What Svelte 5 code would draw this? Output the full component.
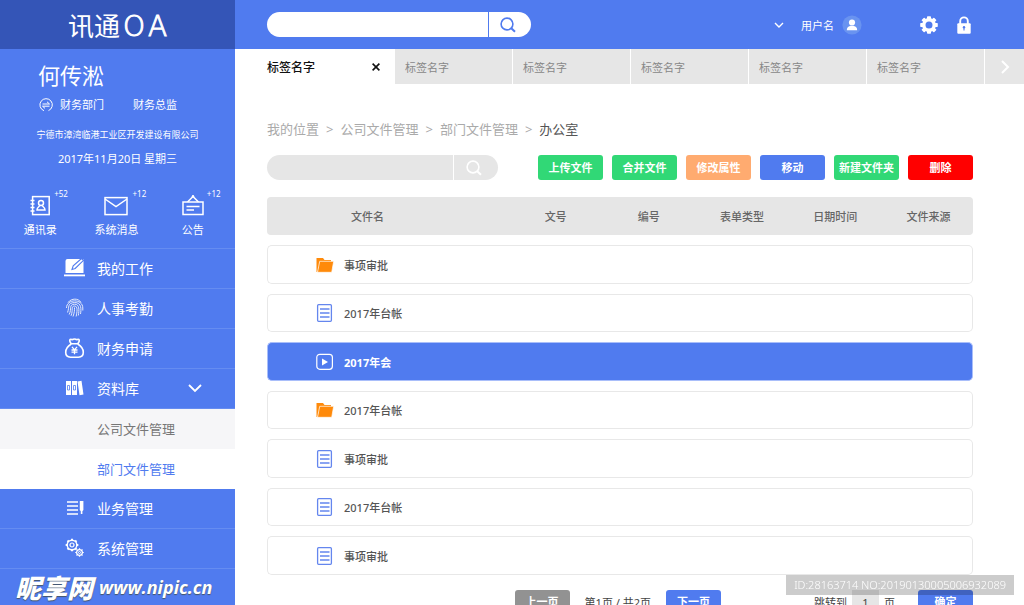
<script>
  const shortcuts = [
    { id: 'contacts', label: '通讯录', count: 52 },
    { id: 'message', label: '系统消息', count: 12 },
    { id: 'notice', label: '公告', count: 12 }
  ];

  const menu = [
    { id: 'work', label: '我的工作' },
    { id: 'attendance', label: '人事考勤' },
    { id: 'finance', label: '财务申请' },
    { id: 'library', label: '资料库', children: ['公司文件管理', '部门文件管理'] },
    { id: 'business', label: '业务管理' },
    { id: 'system', label: '系统管理' }
  ];

  const tabs = ['标签名字', '标签名字', '标签名字', '标签名字', '标签名字'];
  const crumbs = ['我的位置', '公司文件管理', '部门文件管理'];
  const columns = ['文件名', '文号', '编号', '表单类型', '日期时间', '文件来源'];

  const actions = [
    { label: '上传文件', color: 'green' },
    { label: '合并文件', color: 'green' },
    { label: '修改属性', color: 'orange' },
    { label: '移动', color: 'blue' },
    { label: '新建文件夹', color: 'green' },
    { label: '删除', color: 'red' }
  ];

  const files = [
    { type: 'folder', name: '事项审批' },
    { type: 'doc', name: '2017年台帐' },
    { type: 'video', name: '2017年会' },
    { type: 'folder', name: '2017年台帐' },
    { type: 'doc', name: '事项审批' },
    { type: 'doc', name: '2017年台帐' },
    { type: 'doc', name: '事项审批' }
  ];

  const teeth = [0, 45, 90, 135, 180, 225, 270, 315];

  let open = $state('library');
  let activeChild = $state('部门文件管理');
  let selected = $state(2);
  let page = $state('1');

  const toggle = (item) => {
    if (item.children) open = open === item.id ? '' : item.id;
  };
</script>

{#snippet searchIcon()}
  <svg width="16" height="16" viewBox="0 0 16 16" fill="none" stroke="currentColor" stroke-width="1.6">
    <circle cx="7" cy="7" r="5.9" />
    <path d="M11 11l4 3.8" stroke-width="2" />
  </svg>
{/snippet}

{#snippet shortcutIcon(id)}
  {#if id === 'contacts'}
    <svg width="20" height="22" viewBox="2 0 20 22" fill="none" stroke="currentColor" stroke-width="1.5">
      <rect x="4.6" y="1.6" width="16.6" height="18" />
      <path d="M2.500 5.5h4M2.500 9h4M2.500 12.5h4M2.500 16h4" />
      <circle cx="13" cy="8" r="2.5" />
      <path d="M11.8 10.2c0 1.6-2.8 1.8-2.8 4.8h8c0-3-2.8-3.2-2.8-4.8" />
    </svg>
  {:else if id === 'message'}
    <svg width="24" height="22" viewBox="0 0 24 22" fill="none" stroke="currentColor" stroke-width="1.5">
      <rect x="1" y="2.6" width="22" height="17" />
      <path d="M1 4l11 7.5L23 4" />
    </svg>
  {:else}
    <svg width="20" height="22" viewBox="2 0 20 22" fill="none" stroke="currentColor" stroke-width="1.5">
      <rect x="2" y="7" width="20" height="12.5" />
      <path d="M6.5 7L12 1.5 17.5 7M5.5 11.5h13M5.5 15h7.5" />
      <circle cx="12" cy="1.2" r="1.2" fill="currentColor" stroke="none" />
    </svg>
  {/if}
{/snippet}

{#snippet menuIcon(id)}
  <svg width="22" height="20" viewBox="0 0 22 20" fill="none" stroke="currentColor">
    {#if id === 'work'}
      <path d="M3.5 1h16v14H1.5V3a2 2 0 0 1 2-2z" fill="currentColor" stroke="none" />
      <path d="M0 16.5h21v1.8H0z" fill="currentColor" stroke="none" />
      <path d="M8 11.5l1.2-3.6L17.5.5l2 1.8-8.3 8.2z" fill="#fff" stroke="#507bef" stroke-width="1.1" />
    {:else if id === 'attendance'}
      <g stroke-width="1" opacity="0.85">
        <path d="M4 4.5C7.5 0 14.500 0 17 4.500" />
        <path d="M2.500 10C2.500.5 18.800.5 18.800 10v2.500" />
        <path d="M3.600 14.500C5.500 9 3 5 10.600 4.500c7.200 0 6.700 7 5.900 11.500" />
        <path d="M5.200 16.500C8 11 4.500 6.500 10.600 6.200c5 0 4.700 6 3.700 11.300" />
        <path d="M7 17.800C9.500 12 6.500 8.300 10.600 8c3.500 0 2.500 6.500 1.500 10.500" />
        <path d="M9 18.500c1.500-4 1.500-6 1.500-9" />
      </g>
    {:else if id === 'finance'}
      <path d="M7.2 5.8C5.8 3.8 5 2.4 6.2 1.400c1-.7 1.700.5 2.300.2.8-.9 3.200-.9 4 0 .6.3 1.300-.9 2.300-.2 1.200 1 .4 2.400-1 4.400zM7.200 6C4 8 1.700 10.800 1.700 14.300c0 3 1.700 4.900 4.800 4.900h8c3.100 0 4.800-1.900 4.800-4.900 0-3.500-2.300-6.300-5.500-8.300" stroke-width="1.600" />
      <path d="M8 8.800l2.500 3L13 8.800M7.500 12h6M7.500 14.200h6M10.500 12v4.300" stroke-width="1.300" />
    {:else if id === 'library'}
      <path d="M2 3h5v14H2zM8 3h5v14H8zM13.500 3.500l4-.7 2 13.800-4 .7z" fill="currentColor" stroke="none" />
      <path d="M3.500 7.500h2v4.500h-2zM9.500 7.500h2v4.500h-2z" stroke="#507bef" stroke-width="0.800" />
    {:else if id === 'business'}
      <path d="M3 4h11M3 8h11M3 12h11M3 16h11" stroke-width="1.400" />
      <path d="M15.800 3h3.600v9l-1 1.200V16h-1.600v-2.800l-1-1.200z" fill="currentColor" stroke="none" />
    {:else}
      <g transform="translate(8 7)">
        <circle r="4.800" stroke-width="1.400" />
        <circle r="2" stroke-width="1.200" />
        {#each teeth as angle}
          <path d="M-1 -5.500h2" transform="rotate({angle})" stroke-width="1.700" />
        {/each}
      </g>
      <g transform="translate(15.5 14.5)">
        <circle r="2.900" stroke-width="1.300" />
        <circle r="1" />
        {#each teeth as angle}
          <path d="M-.6 -3.600h1.200" transform="rotate({angle})" stroke-width="1.300" />
        {/each}
      </g>
    {/if}
  </svg>
{/snippet}

{#snippet fileIcon(type)}
  <svg width="18" height="18" viewBox="0 0 18 18" fill="none">
    {#if type === 'folder'}
      <path d="M.5 2h6.500l1.500 2H15v2.500H4L1.500 16H.5z" fill="#ff8a0a" />
      <path d="M3.700 5.300h14l-2 11H1.500z" fill="#ff8a0a" stroke="#fff" stroke-width="0.700" />
    {:else if type === 'doc'}
      <rect x="1.600" y=".7" width="13.800" height="16.600" rx="1" stroke="#6486ee" stroke-width="1.300" />
      <path d="M4 5h9.500M4 9h9.500M4 13h9.500" stroke="#6486ee" stroke-width="1.300" />
    {:else}
      <rect x=".8" y="1.300" width="15.600" height="15" rx="3" stroke="#fff" stroke-width="1.200" />
      <path d="M6 5.500l6 3.500-6 3.500z" fill="#fff" />
    {/if}
  </svg>
{/snippet}

<div class="layout">
  <aside class="sidebar">
    <div class="logo">讯通<span>O</span><span>A</span></div>

    <section class="profile">
      <h1>何传淞</h1>
      <div class="dept">
        <svg width="14" height="14" viewBox="0 0 14 14" fill="none" stroke="currentColor">
          <path d="M5 12.700A6.200 6.200 0 1 1 9.500 12.600" />
          <path d="M3.500 6h7L8 3.800M10.500 8.200h-7L6 10.400" />
        </svg>
        <span>财务部门</span>
        <span class="role">财务总监</span>
      </div>
      <p class="company">宁德市漳湾临港工业区开发建设有限公司</p>
      <p class="date">2017年11月20日 星期三</p>

      <div class="shortcuts">
        {#each shortcuts as item}
          <button class="shortcut">
            <span class="shortcut-icon">
              {@render shortcutIcon(item.id)}
              <span class="badge">+{item.count}</span>
            </span>
            {item.label}
          </button>
        {/each}
      </div>
    </section>

    <nav>
      {#each menu as item}
        <button class="menu-item" onclick={() => toggle(item)}>
          {@render menuIcon(item.id)}
          <span>{item.label}</span>
          {#if item.children}
            <svg class="arrow" width="14" height="10" viewBox="0 0 14 10" fill="none" stroke="currentColor" stroke-width="1.8">
              <path d="M1 2l6 6 6-6" />
            </svg>
          {/if}
        </button>
        {#if item.children && open === item.id}
          {#each item.children as child}
            <button class="sub-item" class:active={activeChild === child} onclick={() => (activeChild = child)}>
              {child}
            </button>
          {/each}
        {/if}
      {/each}
    </nav>

    <div class="site"><strong>昵享网</strong><span>www.nipic.cn</span></div>
  </aside>

  <div class="main">
    <header class="topbar">
      <form class="search top-search">
        <input type="text" aria-label="搜索" />
        <button type="button" aria-label="搜索">{@render searchIcon()}</button>
      </form>
      <div class="user-area">
        <button class="user">
          <svg width="10" height="6" viewBox="0 0 10 6" fill="none" stroke="currentColor" stroke-width="1.4">
            <path d="M1 1l4 4 4-4" />
          </svg>
          <span>用户名</span>
          <svg width="20" height="20" viewBox="0 0 20 20" fill="#fff">
            <circle cx="10" cy="10" r="9.6" fill="#6993f0" />
            <circle cx="10" cy="7.5" r="3.1" />
            <path d="M4.8 15.300c0-3 2-4.300 3.700-4.300h3c1.700 0 3.700 1.300 3.700 4.300z" />
          </svg>
        </button>
        <button class="tool" aria-label="设置">
          <svg width="18" height="18" viewBox="-9 -9 18 18">
            <circle r="5.200" fill="none" stroke="#fff" stroke-width="3.400" />
            {#each teeth as angle}
              <rect x="-2" y="-8.800" width="4" height="3.500" rx=".8" fill="#fff" transform="rotate({angle})" />
            {/each}
          </svg>
        </button>
        <button class="tool" aria-label="锁定">
          <svg width="14" height="18" viewBox="0 0 14 18" fill="none">
            <path d="M3.200 8V5.200a3.800 3.800 0 0 1 7.600 0V8" stroke="#fff" stroke-width="1.900" />
            <rect x=".3" y="7.300" width="13.400" height="10.400" rx="1" fill="#fff" />
            <circle cx="7" cy="11.300" r="1.200" fill="#507bef" />
            <path d="M7 11.500v3" stroke="#507bef" stroke-width="1.100" />
          </svg>
        </button>
      </div>
    </header>

    <div class="tabs">
      <div class="tab-active">
        <span>标签名字</span>
        <button aria-label="关闭">
          <svg width="8" height="8" viewBox="0 0 8 8" stroke="#111" stroke-width="1.6">
            <path d="M.6.6l6.800 6.800M7.400.6L.6 7.400" />
          </svg>
        </button>
      </div>
      {#each tabs as tab}
        <button class="tab">{tab}</button>
      {/each}
      <button class="tab-next" aria-label="更多">
        <svg width="8" height="14" viewBox="0 0 8 14" fill="none" stroke="#fff" stroke-width="2">
          <path d="M1 1l6 6-6 6" />
        </svg>
      </button>
    </div>

    <main>
      <div class="crumbs">
        {#each crumbs as crumb}
          <a href="#top">{crumb}</a>
          <span>&gt;</span>
        {/each}
        <b>办公室</b>
      </div>

      <div class="toolbar">
        <form class="search file-search">
          <input type="text" aria-label="搜索文件" />
          <button type="button" aria-label="搜索文件">{@render searchIcon()}</button>
        </form>
        <div class="actions">
          {#each actions as action}
            <button class="btn {action.color}">{action.label}</button>
          {/each}
        </div>
      </div>

      <table>
        <thead>
          <tr>
            {#each columns as column}
              <th>{column}</th>
            {/each}
          </tr>
        </thead>
        <tbody>
          {#each files as file, i}
            <tr class:selected={selected === i} onclick={() => (selected = i)}>
              <td>
                <div class="file">
                  {@render fileIcon(file.type)}
                  <span>{file.name}</span>
                </div>
              </td>
              <td></td>
              <td></td>
              <td></td>
              <td></td>
              <td></td>
            </tr>
          {/each}
        </tbody>
      </table>

      <div class="pager">
        <button class="btn gray">上一页</button>
        <span class="count">第1页 / 共2页</span>
        <button class="btn blue">下一页</button>
        <label class="jump">跳转到 <input type="text" bind:value={page} /> 页</label>
        <button class="btn blue">确定</button>
      </div>
    </main>
  </div>

  <div class="serial">ID:28163714 NO:20190130005006932089</div>
</div>

<style>
  :global(body) {
    margin: 0;
    background: #fff;
  }

  .layout {
    display: grid;
    grid-template-columns: 235px 1fr;
    height: 100vh;
    overflow: hidden;
    font-family: "Noto Sans", "Noto Sans CJK SC", sans-serif;
    font-size: 11px;
    color: #555;
  }

  button,
  input {
    margin: 0;
    padding: 0;
    border: none;
    background: none;
    font: inherit;
    color: inherit;
  }

  button {
    cursor: pointer;
  }

  svg {
    flex: none;
    overflow: visible;
  }

  /* sidebar */
  .sidebar {
    background: #507bef;
    color: #fff;
    overflow: hidden;
  }

  .logo {
    display: flex;
    align-items: center;
    justify-content: center;
    height: 49px;
    background: #3455b7;
    font-size: 26px;
    font-weight: 400;
  }

  .logo span {
    margin-left: 3px;
    padding-top: 3px;
    font-family: "DejaVu Sans", sans-serif;
    font-size: 28px;
    font-weight: 200;
    -webkit-text-stroke: 1px #fff;
  }

  .profile {
    box-sizing: border-box;
    height: 200px;
    padding-top: 10px;
    border-bottom: 1px solid #658cf1;
  }

  .profile h1 {
    margin: 0;
    padding-left: 38px;
    font-size: 22px;
    font-weight: 400;
    line-height: 32px;
  }

  .dept {
    display: flex;
    align-items: center;
    gap: 7px;
    padding: 4px 0 0 39px;
    line-height: 20px;
  }

  .role {
    margin-left: 22px;
  }

  .company,
  .date {
    margin: 0;
    line-height: 20px;
    text-align: center;
  }

  .company {
    margin-top: 10px;
    font-size: 9px;
  }

  .date {
    margin-top: 4px;
  }

  .shortcuts {
    display: grid;
    grid-template-columns: repeat(3, 1fr);
    margin-top: 26px;
    padding: 0 4px 0 2px;
  }

  .shortcut {
    display: flex;
    flex-direction: column;
    align-items: center;
    gap: 3px;
    line-height: 20px;
  }

  .shortcut-icon {
    position: relative;
    display: flex;
  }

  .badge {
    position: absolute;
    top: -6px;
    left: calc(100% + 4px);
    font-size: 8px;
    line-height: 10px;
  }

  .menu-item,
  .sub-item {
    display: flex;
    align-items: center;
    box-sizing: border-box;
    width: 100%;
    height: 40px;
    padding-bottom: 2px;
  }

  .menu-item {
    gap: 11px;
    padding-left: 64px;
    padding-right: 33px;
    border-bottom: 1px solid #658cf1;
    font-size: 14px;
  }

  .arrow {
    margin-left: auto;
  }

  .sub-item {
    padding-left: 97px;
    background: #f6f6f8;
    color: #777;
    font-size: 13px;
  }

  .sub-item.active {
    background: #fff;
    color: #507bef;
  }

  .site {
    display: flex;
    align-items: center;
    gap: 6px;
    height: 36px;
    padding-left: 15px;
    font-style: italic;
    text-shadow: 0 1px 1px #456;
  }

  .site strong {
    font-size: 26px;
    font-weight: 900;
  }

  .site span {
    font-family: "Open Sans", sans-serif;
    font-size: 18px;
    font-weight: 700;
  }

  /* top bar */
  .main {
    min-width: 0;
  }

  .topbar {
    display: flex;
    align-items: center;
    justify-content: space-between;
    height: 49px;
    padding: 0 53px 0 32px;
    background: #507bef;
    color: #fff;
  }

  .search {
    display: flex;
    height: 25px;
    border-radius: 13px;
    overflow: hidden;
  }

  .search input {
    flex: 1;
    min-width: 0;
    padding: 0 12px;
    outline: none;
  }

  .search button {
    display: flex;
    align-items: center;
    justify-content: center;
    width: 43px;
    padding-right: 4px;
  }

  .top-search {
    width: 264px;
    background: #fff;
    color: #507bef;
  }

  .top-search button {
    border-left: 1px solid #507bef;
  }

  .user-area {
    display: flex;
    align-items: center;
  }

  .user {
    display: flex;
    align-items: center;
    margin-right: 39px;
  }

  .user span {
    margin: 0 8px 0 17px;
  }

  .tool {
    display: flex;
    margin-left: 19px;
  }

  /* tabs */
  .tabs {
    display: flex;
    height: 35px;
  }

  .tab-active {
    display: flex;
    align-items: center;
    justify-content: space-between;
    box-sizing: border-box;
    width: 160px;
    padding: 0 15px 0 32px;
    color: #111;
    font-size: 12px;
    font-weight: 500;
  }

  .tab-active button {
    display: flex;
  }

  .tab {
    flex: 1;
    padding-left: 10px;
    border-right: 1px solid #fff;
    background: #e6e6e6;
    color: #888;
    text-align: left;
  }

  .tab-next {
    display: flex;
    align-items: center;
    justify-content: center;
    width: 39px;
    background: #e6e6e6;
  }

  /* content */
  main {
    padding: 32px 51px 0 32px;
  }

  .crumbs {
    display: flex;
    gap: 7px;
    line-height: 26px;
    font-size: 13px;
    color: #aaa;
  }

  .crumbs a {
    color: inherit;
    text-decoration: none;
  }

  .crumbs b {
    color: #555;
    font-weight: 400;
  }

  .toolbar {
    display: flex;
    justify-content: space-between;
    margin-top: 13px;
  }

  .file-search {
    width: 231px;
    background: #e6e6e6;
    color: #fff;
  }

  .file-search button {
    width: 45px;
    padding-right: 5px;
    border-left: 1px solid #fff;
  }

  .actions {
    display: flex;
    gap: 9px;
  }

  .btn {
    width: 65px;
    height: 25px;
    padding-bottom: 2px;
    border-radius: 3px;
    color: #fff;
    font-weight: 700;
    white-space: nowrap;
  }

  .green {
    background: #31d876;
  }

  .orange {
    background: #ffab70;
  }

  .blue {
    background: #507bef;
  }

  .red {
    background: #f00;
  }

  .gray {
    background: #929292;
  }

  table {
    width: 100%;
    margin-top: 7px;
    table-layout: fixed;
    border-collapse: separate;
    border-spacing: 0 10px;
  }

  th {
    height: 38px;
    padding: 0 0 0 4px;
    background: #e6e6e6;
    color: #666;
    font-weight: 500;
  }

  th:first-child {
    width: 34%;
    box-sizing: border-box;
    padding-left: 84px;
    border-radius: 4px 0 0 4px;
    text-align: left;
  }

  th:last-child {
    border-radius: 0 4px 4px 0;
  }

  td {
    box-sizing: border-box;
    height: 38px;
    padding: 0;
    border: solid #e8e8e8;
    border-width: 1px 0;
  }

  tr:nth-child(odd) td {
    height: 39px;
  }

  td:first-child {
    border-left-width: 1px;
    border-radius: 5px 0 0 5px;
  }

  td:last-child {
    border-right-width: 1px;
    border-radius: 0 5px 5px 0;
  }

  .file {
    display: flex;
    align-items: center;
    gap: 10px;
    padding-left: 48px;
    font-weight: 500;
  }

  .selected td {
    border-color: #a9befa;
    background: #507bef;
    color: #fff;
  }

  .selected .file {
    font-weight: 700;
  }

  .pager {
    display: flex;
    align-items: center;
    justify-content: flex-end;
    margin-top: 5px;
    line-height: 20px;
    color: #444;
  }

  .pager .btn {
    width: 55px;
  }

  .count {
    margin: 0 15px;
  }

  .jump {
    display: flex;
    align-items: center;
    gap: 5px;
    margin: 0 23px 0 93px;
  }

  .jump input {
    width: 27px;
    height: 25px;
    background: #e6e6e6;
    text-align: center;
  }

  .serial {
    position: fixed;
    right: 10px;
    bottom: 10px;
    padding: 0 8px;
    background: rgba(0, 0, 0, 0.2);
    color: #fff;
    font-size: 11px;
    font-weight: 300;
    line-height: 20px;
  }
</style>
